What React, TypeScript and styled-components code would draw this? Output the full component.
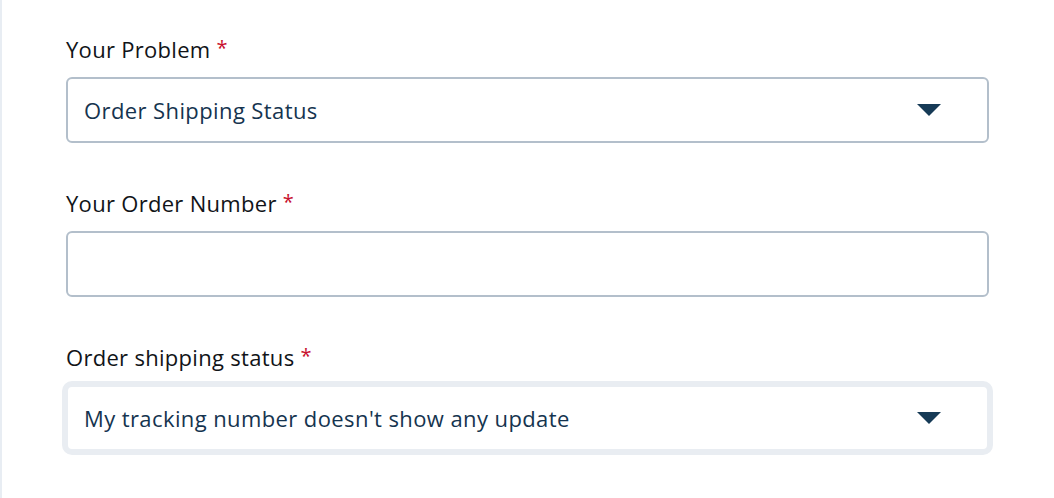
import React from "react";
import styled, { createGlobalStyle } from "styled-components";

const Global = createGlobalStyle`
  html, body { margin: 0; padding: 0; background: #ffffff; }
  body { font-family: "Open Sans", "Noto Sans", sans-serif; }
`;

const Page = styled.div`
  box-sizing: border-box;
  width: 1054px;
  height: 498px;
  border-left: 2px solid #e8edf3;
  padding: 36px 65px 0 64px;
  display: flex;
  flex-direction: column;
`;

const Field = styled.div<{ $gap: number }>`
  display: flex;
  flex-direction: column;
  gap: 15px;
  margin-top: ${(p) => p.$gap}px;
`;

const Label = styled.label`
  font-size: 22px;
  line-height: 26px;
  letter-spacing: 0.3px;
  color: #111418;
  display: flex;
  align-items: flex-start;
  gap: 6px;
`;

const Star = styled.span`
  color: #c8102e;
  font-size: 20px;
  line-height: 24px;
`;

const Box = styled.div<{ $focused?: boolean }>`
  box-sizing: border-box;
  height: 66px;
  border-radius: 6px;
  border: 2px solid ${(p) => (p.$focused ? "#e9edf2" : "#b3bfcb")};
  box-shadow: ${(p) => (p.$focused ? "0 0 0 4px #e9edf2" : "none")};
  background: #ffffff;
  display: flex;
  align-items: center;
  justify-content: space-between;
  padding: 0 46px 0 16px;
  font-size: 22px;
  letter-spacing: 0.4px;
  color: #15344f;
`;

const Arrow = styled.svg`
  width: 24px;
  height: 12px;
  display: block;
`;

const Caret = () => (
  <Arrow viewBox="0 0 24 12">
    <path d="M0 0 H24 L12 12 Z" fill="#163a56" />
  </Arrow>
);

export default function App() {
  return (
    <>
      <Global />
      <Page>
        <Field $gap={0}>
          <Label>
            Your Problem <Star>*</Star>
          </Label>
          <Box>
            <span>Order Shipping Status</span>
            <Caret />
          </Box>
        </Field>
        <Field $gap={47}>
          <Label>
            Your Order Number <Star>*</Star>
          </Label>
          <Box />
        </Field>
        <Field $gap={47}>
          <Label>
            Order shipping status <Star>*</Star>
          </Label>
          <Box $focused>
            <span>My tracking number doesn't show any update</span>
            <Caret />
          </Box>
        </Field>
      </Page>
    </>
  );
}
